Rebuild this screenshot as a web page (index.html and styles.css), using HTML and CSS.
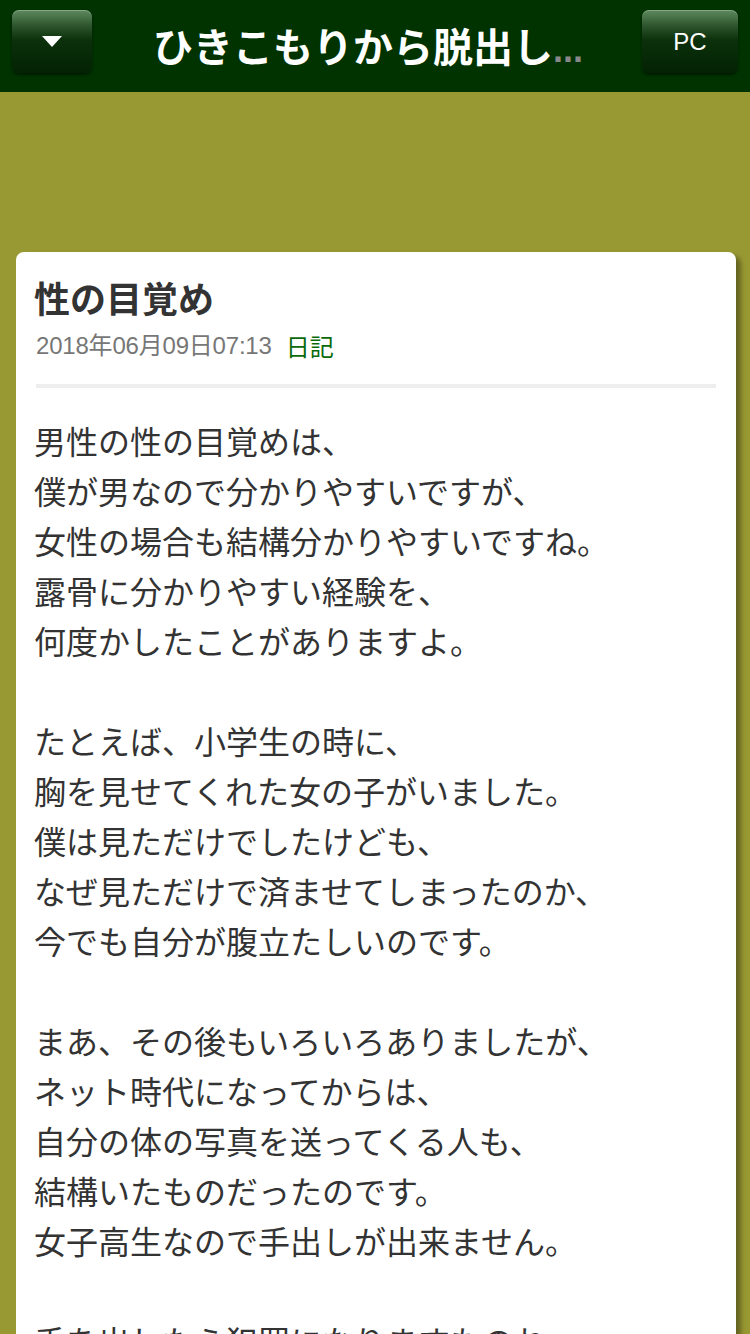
FILE: index.html
```html
<!DOCTYPE html>
<html lang="ja">
<head>
<meta charset="utf-8">
<link rel="stylesheet" href="styles.css">
</head>
<body>
<header class="topbar">
  <button class="btn btn-menu" aria-label="menu">
    <svg width="20" height="12" viewBox="0 0 20 12"><polygon points="0,0 20,0 10,11" fill="#fff"/></svg>
  </button>
  <h1 class="site-title">ひきこもりから脱出し<span class="dots">...</span></h1>
  <button class="btn btn-pc">PC</button>
</header>
<div class="ad-space"></div>
<article class="card">
  <h2 class="entry-title">性の目覚め</h2>
  <div class="meta"><span class="date">2018年06月09日07:13</span><span class="cat">日記</span></div>
  <hr class="divider">
  <div class="body">
    <p>男性の性の目覚めは、<br>僕が男なので分かりやすいですが、<br>女性の場合も結構分かりやすいですね。<br>露骨に分かりやすい経験を、<br>何度かしたことがありますよ。</p>
    <p>たとえば、小学生の時に、<br>胸を見せてくれた女の子がいました。<br>僕は見ただけでしたけども、<br>なぜ見ただけで済ませてしまったのか、<br>今でも自分が腹立たしいのです。</p>
    <p>まあ、その後もいろいろありましたが、<br>ネット時代になってからは、<br>自分の体の写真を送ってくる人も、<br>結構いたものだったのです。<br>女子高生なので手出しが出来ません。</p>
    <p>手を出したら犯罪になりますものね。</p>
  </div>
</article>
</body>
</html>
```
FILE: styles.css
```css
html, body {
  margin: 0;
  padding: 0;
}
body {
  background: #999933;
  font-family: "Noto Sans CJK JP", "Noto Sans", sans-serif;
  overflow: hidden;
  height: 1334px;
}
.topbar {
  height: 92px;
  background: #003300;
  display: flex;
  align-items: flex-start;
  justify-content: space-between;
  padding: 10px 12px 0;
  box-sizing: border-box;
}
.btn {
  height: 63px;
  border: none;
  border-radius: 7px;
  background: linear-gradient(to bottom, #5e8a5e 0%, #2d552d 25%, #0b300b 48%, #032203 100%);
  box-shadow: 0 2px 3px rgba(0,0,0,0.5), inset 0 1px 0 rgba(255,255,255,0.25);
  display: flex;
  align-items: center;
  justify-content: center;
  color: #fff;
  padding: 0;
}
.btn-menu {
  width: 80px;
}
.btn-pc {
  width: 96px;
  font-family: "Liberation Sans", Arial, sans-serif;
  font-size: 24px;
}
.site-title {
  margin: 0;
  align-self: center;
  margin-top: -10px;
  color: #fff;
  font-size: 40px;
  font-weight: bold;
  line-height: 1;
  white-space: nowrap;
  padding-left: 2px;
}
.dots {
  color: #888;
  font-family: "Liberation Sans", Arial, sans-serif;
  font-size: 36px;
}
.ad-space {
  height: 160px;
}
.card {
  margin: 0 14px 0 16px;
  background: #fff;
  border-radius: 8px;
  box-shadow: 5px 4px 5px rgba(0,0,0,0.35);
  padding: 20px 20px 40px;
}
.entry-title {
  margin: 0 0 0 -2px;
  font-size: 36px;
  font-weight: bold;
  line-height: 50px;
  color: #333;
}
.meta {
  margin-top: 8px;
  font-size: 24px;
  line-height: 32px;
  color: #777;
  display: flex;
  gap: 14px;
}
.date {
  font-family: "Liberation Sans", "Noto Sans CJK JP", sans-serif;
  letter-spacing: -0.2px;
}
.cat {
  color: #0a6a0a;
}
.divider {
  margin: 22px 0 0;
  border: none;
  height: 4px;
  background: #eeeeee;
}
.body {
  margin-top: 27px;
  margin-left: -2px;
  font-size: 32px;
  line-height: 50px;
  color: #333;
}
.body p {
  margin: 0 0 50px;
}
```
